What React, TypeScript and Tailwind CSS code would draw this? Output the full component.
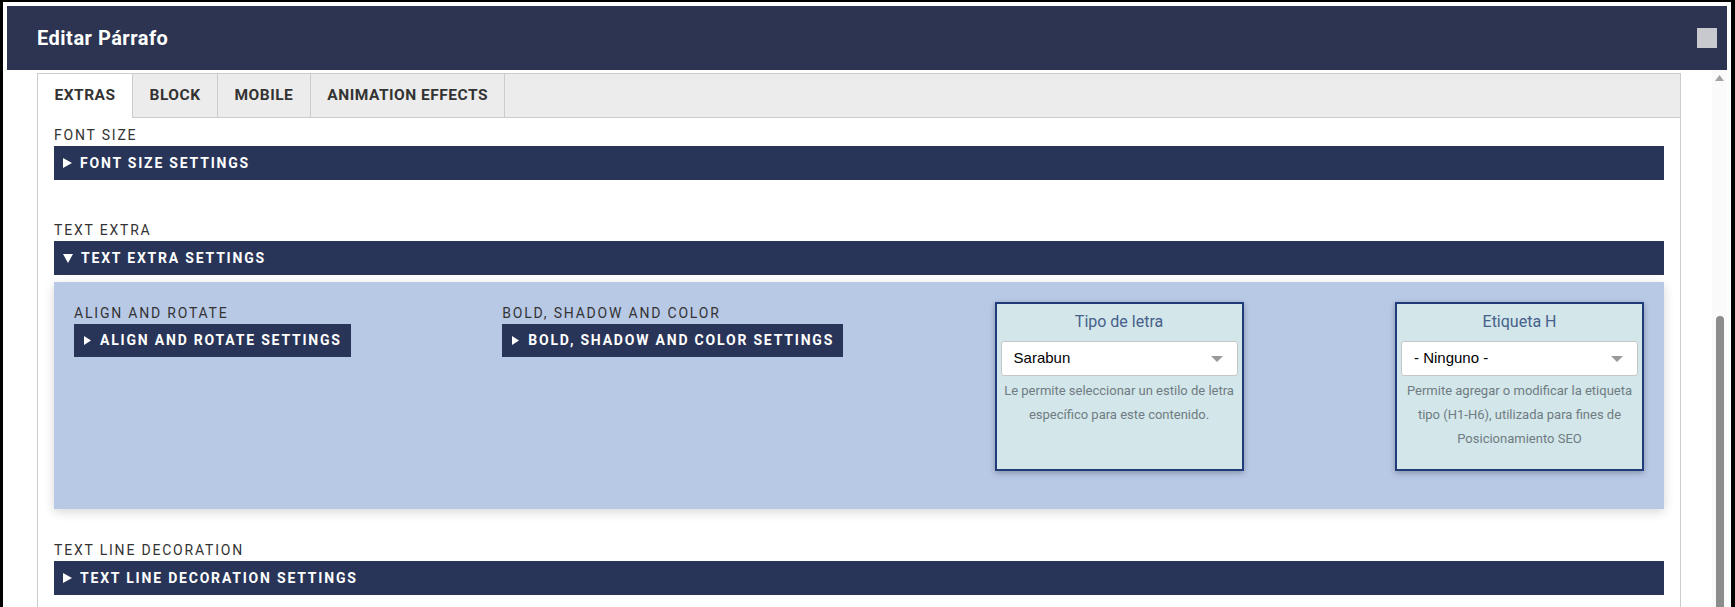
type CaretProps = {
  open?: boolean
  small?: boolean
}

function Caret({ open, small }: CaretProps) {
  if (open) {
    return (
      <svg width="10" height="9" viewBox="0 0 10 9" className="shrink-0">
        <path d="M0 0H10L5 9Z" fill="currentColor" />
      </svg>
    )
  }
  const w = small ? 7 : 9
  const h = small ? 9 : 10
  return (
    <svg width={w} height={h} viewBox={`0 0 ${w} ${h}`} className="shrink-0">
      <path d={`M0 0L${w} ${h / 2}L0 ${h}Z`} fill="currentColor" />
    </svg>
  )
}

function SectionLabel({ children }: { children: string }) {
  return <p className="text-[14px] leading-[22px] tracking-[1.8px] text-[#333]">{children}</p>
}

function SettingsBar({ title, open }: { title: string; open?: boolean }) {
  return (
    <div className="flex h-[34px] items-center gap-[8px] bg-[#293558] pl-[9px] text-[14px] font-bold tracking-[1.8px] text-white">
      <Caret open={open} />
      <span>{title}</span>
    </div>
  )
}

function SettingsButton({ title }: { title: string }) {
  return (
    <div className="flex h-[33px] items-center gap-[9px] bg-[#293558] pl-[10px] pr-[9px] text-[14px] font-bold tracking-[1.8px] text-white">
      <Caret small />
      <span>{title}</span>
    </div>
  )
}

type FieldCardProps = {
  title: string
  value: string
  help: string[]
}

function FieldCard({ title, value, help }: FieldCardProps) {
  return (
    <div className="h-[169px] w-[249px] border-2 border-[#1f3b7a] bg-[#d3e6e9] px-[4px] shadow-[0_2px_6px_rgba(0,0,0,0.28)]">
      <p className="pt-[6px] text-center text-[16px] leading-[24px] text-[#46618b]">{title}</p>
      <div className="mt-[7px] flex h-[35px] items-center justify-between rounded-[3px] border border-[#c6c6c6] bg-white pl-[12px] pr-[14px] font-['Liberation_Sans',Arial,sans-serif] text-[15px] text-black">
        <span>{value}</span>
        <svg width="12" height="6" viewBox="0 0 12 6">
          <path d="M0 0H12L6 6Z" fill="#9a9a9a" />
        </svg>
      </div>
      <div className="mt-[3px] text-center text-[13px] leading-[24px] text-[#6f7c83]">
        {help.map((line) => (
          <p key={line}>{line}</p>
        ))}
      </div>
    </div>
  )
}

const tabs = ['EXTRAS', 'BLOCK', 'MOBILE', 'ANIMATION EFFECTS']

export default function App() {
  return (
    <div className="h-[607px] overflow-hidden bg-black pl-[3px] pr-[4px] pt-[2px] font-['Roboto','Noto_Sans',sans-serif]">
      <div className="flex h-[605px] flex-col border-4 border-b-0 border-white bg-white">
        <header className="flex h-[64px] shrink-0 items-center justify-between bg-[#2d3451] pl-[30px] pr-[10px]">
          <h1 className="text-[20px] font-bold tracking-[0.5px] text-white">Editar Párrafo</h1>
          <div className="h-[20px] w-[20px] bg-[#c8c9ce]" />
        </header>

        <div className="flex min-h-0 flex-1">
          <div className="flex min-w-0 flex-1 flex-col pl-[30px] pr-[31px] pt-[3px]">
            <div className="flex-1 overflow-hidden border border-b-0 border-[#ccc]">
              <nav className="flex h-[44px] bg-[#ececec]">
                {tabs.map((tab, i) => (
                  <div
                    key={tab}
                    className={`flex items-center border-r border-[#ccc] px-[16.5px] text-[15.5px] font-bold tracking-[0.5px] text-[#333] ${
                      i === 0 ? 'bg-white' : 'border-b'
                    }`}
                  >
                    {tab}
                  </div>
                ))}
                <div className="flex-1 border-b border-[#ccc]" />
              </nav>

              <div className="px-4 pt-[6px]">
                <SectionLabel>FONT SIZE</SectionLabel>
                <SettingsBar title="FONT SIZE SETTINGS" />

                <div className="mt-[39px]">
                  <SectionLabel>TEXT EXTRA</SectionLabel>
                  <SettingsBar title="TEXT EXTRA SETTINGS" open />
                </div>

                <div className="mt-[7px] flex items-start justify-between bg-[#b8c9e6] px-[20px] pb-[38px] pt-[20px] shadow-[0_3px_10px_rgba(0,0,0,0.16)]">
                  <div className="flex flex-col items-start">
                    <SectionLabel>ALIGN AND ROTATE</SectionLabel>
                    <SettingsButton title="ALIGN AND ROTATE SETTINGS" />
                  </div>
                  <div className="flex flex-col items-start">
                    <SectionLabel>BOLD, SHADOW AND COLOR</SectionLabel>
                    <SettingsButton title="BOLD, SHADOW AND COLOR SETTINGS" />
                  </div>
                  <FieldCard
                    title="Tipo de letra"
                    value="Sarabun"
                    help={['Le permite seleccionar un estilo de letra', 'específico para este contenido.']}
                  />
                  <FieldCard
                    title="Etiqueta H"
                    value="- Ninguno -"
                    help={[
                      'Permite agregar o modificar la etiqueta',
                      'tipo (H1-H6), utilizada para fines de',
                      'Posicionamiento SEO',
                    ]}
                  />
                </div>

                <div className="mt-[30px]">
                  <SectionLabel>TEXT LINE DECORATION</SectionLabel>
                  <SettingsBar title="TEXT LINE DECORATION SETTINGS" />
                </div>
              </div>
            </div>
          </div>

          <div className="flex w-[15px] shrink-0 flex-col items-center bg-[#fafafa]">
            <svg width="9" height="6" viewBox="0 0 9 6" className="mt-[5px]">
              <path d="M0 6L4.5 0L9 6Z" fill="#a3a3a3" />
            </svg>
            <div className="mt-[235px] w-[8px] flex-1 rounded-t-[4px] bg-[#8c8c8c]" />
          </div>
        </div>
      </div>
    </div>
  )
}
